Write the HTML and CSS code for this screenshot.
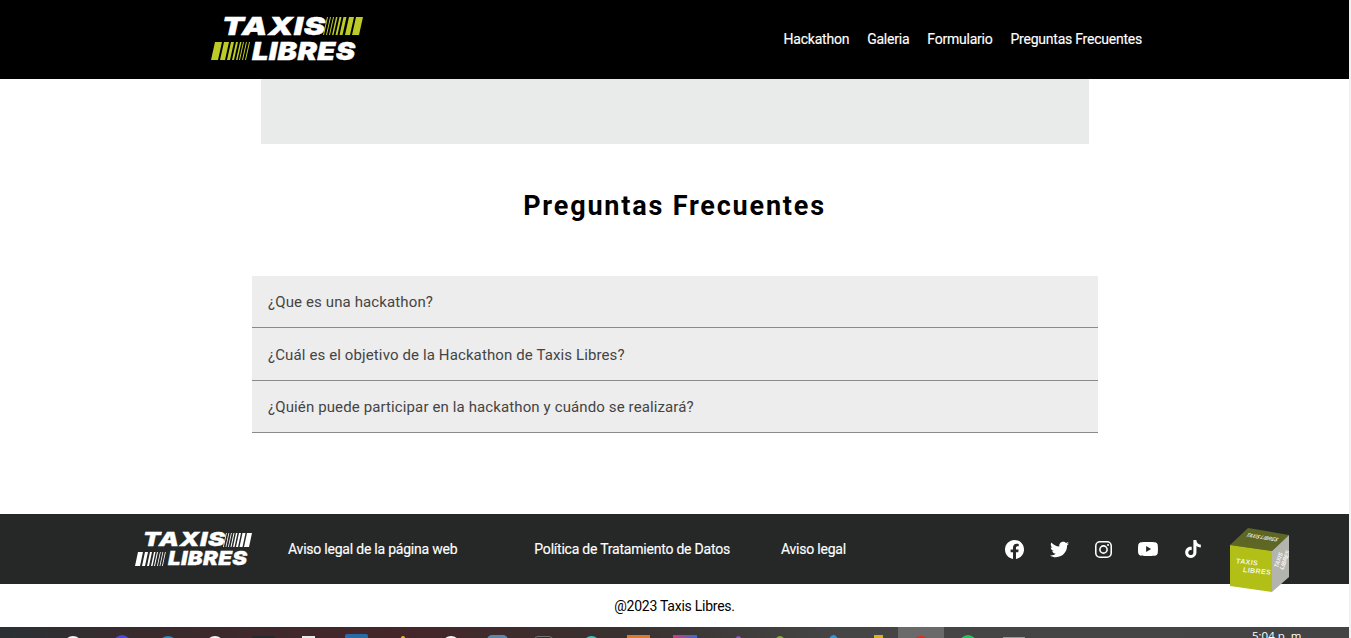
FILE: index.html
```html
<!DOCTYPE html>
<html lang="es">
<head>
<meta charset="utf-8">
<title>Preguntas Frecuentes - Taxis Libres</title>
<link rel="stylesheet" href="styles.css">
</head>
<body>
<header class="site-header">
  <a class="logo" href="#">
    <span class="logo-row logo-row-one">
      <span class="logo-word word-taxis">TAXIS</span>
      <svg class="stripes" width="40" height="18" viewBox="0 0 40 18"><path fill="#bccb25" d="M4 0h1L1 18H0zM7 0h1L4 18H3zM10 0h1L7 18H6zM13 0h1.500l-4 18H9zM16.500 0h2l-4 18h-2zM20.500 0h3l-4 18h-3zM26 0h5l-4 18h-5zM33 0h7l-4 18h-7z"/></svg>
    </span>
    <span class="logo-row">
      <svg class="stripes" width="41" height="18" viewBox="0 0 41 18"><path fill="#bccb25" d="M4 0h7L7 18H0zM13 0h5l-4 18H9zM20 0h3l-4 18h-3zM25 0h2l-4 18h-2zM29 0h1.500l-4 18H25zM32 0h1l-4 18h-1zM35 0h1l-4 18h-1zM38 0h1l-4 18h-1z"/></svg>
      <span class="logo-word word-libres">LIBRES</span>
    </span>
  </a>
  <nav class="main-nav">
    <a href="#">Hackathon</a>
    <a href="#">Galeria</a>
    <a href="#">Formulario</a>
    <a href="#">Preguntas Frecuentes</a>
  </nav>
</header>

<main class="content">
  <div class="banner"></div>
  <h1 class="title">Preguntas Frecuentes</h1>
  <section class="faq">
    <div class="faq-item">¿Que es una hackathon?</div>
    <div class="faq-item">¿Cuál es el objetivo de la Hackathon de Taxis Libres?</div>
    <div class="faq-item">¿Quién puede participar en la hackathon y cuándo se realizará?</div>
  </section>
</main>

<footer class="site-footer">
  <div class="footer-bar">
    <a class="logo logo-small" href="#">
      <span class="logo-row logo-row-one">
        <span class="logo-word word-taxis">TAXIS</span>
        <svg class="stripes" width="29" height="14" viewBox="0 0 29 14"><path fill="#fff" d="M3 0h.8l-3 14H0zM5.500 0h.8l-3 14h-.8zM8 0h.8l-3 14H5zM10.500 0h1l-3 14h-1zM13 0h1.500l-3 14H10zM16 0h2l-3 14h-2zM19.500 0h3l-3 14h-3zM24 0h5l-3 14h-5z"/></svg>
      </span>
      <span class="logo-row">
        <svg class="stripes" width="33" height="14" viewBox="0 0 33 14"><path fill="#fff" d="M3 0h5L5 14H0zM10 0h3l-3 14H7zM15 0h2l-3 14h-2zM19 0h1.500l-3 14H16zM22 0h1l-3 14h-1zM25 0h.8l-3 14H22zM27.500 0h.8l-3 14h-.8zM30 0h.8l-3 14H27z"/></svg>
        <span class="logo-word word-libres">LIBRES</span>
      </span>
    </a>
    <a class="legal legal-one" href="#">Aviso legal de la página web</a>
    <a class="legal legal-two" href="#">Política de Tratamiento de Datos</a>
    <a class="legal legal-three" href="#">Aviso legal</a>
    <div class="social">
      <svg viewBox="0 0 24 24" width="19" height="19"><path fill="#fff" d="M24 12.070C24 5.400 18.630 0 12 0S0 5.400 0 12.070c0 6.030 4.390 11.020 10.130 11.930v-8.440H7.080v-3.490h3.050V9.410c0-3.020 1.790-4.690 4.530-4.690 1.310 0 2.680.24 2.680.24v2.970h-1.510c-1.490 0-1.960.93-1.960 1.880v2.260h3.330l-.53 3.490h-2.800V24C19.610 23.100 24 18.100 24 12.070z"/></svg>
      <svg viewBox="0 0 24 24" width="19" height="19"><path fill="#fff" d="M24 4.560c-.88.390-1.830.660-2.830.780 1.020-.610 1.800-1.580 2.170-2.730-.95.570-2.010.980-3.130 1.200C19.310 2.800 18.030 2.200 16.620 2.200c-3.180 0-5.520 2.970-4.800 6.050C7.730 8.050 4.100 6.090 1.670 3.110.380 5.320 1 8.210 3.190 9.670c-.810-.030-1.570-.250-2.230-.620-.050 2.280 1.580 4.410 3.950 4.890-.690.190-1.450.230-2.220.080.630 1.960 2.440 3.380 4.600 3.420C5.220 19.060 2.610 19.780 0 19.470c2.180 1.400 4.770 2.210 7.550 2.210 9.140 0 14.310-7.720 14-14.650.960-.690 1.790-1.560 2.450-2.470z"/></svg>
      <svg viewBox="0 0 24 24" width="17" height="17"><path fill="#fff" d="M7 0h10a7 7 0 0 1 7 7v10a7 7 0 0 1-7 7H7a7 7 0 0 1-7-7V7a7 7 0 0 1 7-7zm0 2.200A4.800 4.800 0 0 0 2.200 7v10A4.800 4.800 0 0 0 7 21.800h10a4.800 4.800 0 0 0 4.800-4.800V7A4.800 4.800 0 0 0 17 2.200H7zm5 3.600a6.200 6.200 0 1 1 0 12.400 6.200 6.200 0 0 1 0-12.400zm0 2.200a4 4 0 1 0 0 8 4 4 0 0 0 0-8zm6.400-3.900a1.450 1.450 0 1 1 0 2.900 1.450 1.450 0 0 1 0-2.900z"/></svg>
      <svg viewBox="0 0 24 24" width="20" height="20"><path fill="#fff" d="M23.500 6.200a3 3 0 0 0-2.100-2.100C19.500 3.550 12 3.550 12 3.550s-7.500 0-9.400.55A3 3 0 0 0 .5 6.200C0 8.100 0 12 0 12s0 3.900.5 5.800a3 3 0 0 0 2.100 2.100c1.900.55 9.400.55 9.400.55s7.500 0 9.400-.55a3 3 0 0 0 2.100-2.100C24 15.900 24 12 24 12s0-3.900-.5-5.800zM9.750 15.500v-7l6 3.500-6 3.500z"/></svg>
      <svg viewBox="0 0 24 24" width="18" height="18"><path fill="#fff" d="M12.530.020C13.840 0 15.140.010 16.440 0c.08 1.530.630 3.090 1.750 4.170 1.120 1.110 2.700 1.620 4.240 1.790v4.030c-1.440-.050-2.890-.350-4.200-.970-.570-.260-1.100-.590-1.620-.930-.010 2.920.010 5.840-.020 8.750-.080 1.400-.540 2.790-1.350 3.940-1.310 1.920-3.580 3.170-5.910 3.210-1.430.080-2.860-.310-4.080-1.030-2.020-1.190-3.440-3.370-3.650-5.710-.020-.500-.030-1-.010-1.490.180-1.900 1.120-3.720 2.580-4.960 1.660-1.440 3.980-2.130 6.150-1.720.020 1.480-.040 2.960-.040 4.440-.990-.320-2.150-.230-3.020.370-.630.410-1.110 1.040-1.360 1.750-.210.510-.150 1.070-.140 1.610.240 1.640 1.820 3.020 3.500 2.870 1.120-.010 2.190-.660 2.770-1.610.190-.330.400-.670.410-1.060.100-1.790.060-3.570.070-5.360.010-4.030-.010-8.050.020-12.070z"/></svg>
    </div>
    <div class="cube">
      <div class="cube-face cube-top"><span class="cube-text-top">TAXIS LIBRES</span></div>
      <div class="cube-face cube-front"><span class="cube-text-front">TAXIS<span class="cube-line-two">LIBRES</span></span></div>
      <div class="cube-face cube-side"><span class="cube-text-side">TAXIS<br>LIBRES</span></div>
    </div>
  </div>
  <p class="copy">@2023 Taxis Libres.</p>
</footer>

<div class="taskbar">
  <i class="tb tb-white"></i>
  <i class="tb tb-blue"></i>
  <i class="tb tb-cyan"></i>
  <i class="tb tb-white"></i>
  <i class="tb tb-dark"></i>
  <i class="tb tb-paper"></i>
  <i class="tb tb-navy"></i>
  <i class="tb tb-yellow"></i>
  <i class="tb tb-white"></i>
  <i class="tb tb-steel"></i>
  <i class="tb tb-dark-small"></i>
  <i class="tb tb-teal"></i>
  <i class="tb tb-orange"></i>
  <i class="tb tb-multi"></i>
  <i class="tb tb-purple"></i>
  <i class="tb tb-olive"></i>
  <i class="tb tb-sky"></i>
  <i class="tb tb-gold"></i>
  <span class="tb-active"><i class="tb tb-red"></i></span>
  <i class="tb tb-green"></i>
  <i class="tb tb-grey"></i>
  <span class="clock">5:04 p. m.</span>
</div>
</body>
</html>
```

FILE: styles.css
```css
* { box-sizing: border-box; }
html { background: #f1f1f1; height: 638px; overflow: hidden; }
body { margin: 0; width: 1349px; height: 638px; overflow: hidden; background: #fff; font-family: Roboto, "Liberation Sans", sans-serif; color: #000; position: relative; }
a { color: inherit; text-decoration: none; }

.site-header { height: 79px; background: #000; display: flex; align-items: center; justify-content: space-between; padding: 0 207px 2px 211px; }
.logo { display: flex; flex-direction: column; color: #fff; width: 152px; }
.logo-row { display: flex; align-items: center; height: 25px; }
.logo-row-one { padding-left: 11px; }
.logo-word { display: block; font-family: Inter, "Liberation Sans", sans-serif; font-weight: 900; font-style: italic; font-size: 25px; line-height: 18px; transform-origin: left center; white-space: nowrap; -webkit-text-stroke: .4px #fff; }
.word-taxis { width: 101px; letter-spacing: .5px; transform: scaleX(1.285); }
.word-libres { width: 103px; letter-spacing: .3px; transform: scaleX(1.164); }
.main-nav { display: flex; gap: 18px; font-size: 14px; font-weight: 400; color: #fff; letter-spacing: -.23px; -webkit-text-stroke: .15px #fff; }

.content { height: 435px; }
.banner { width: 828px; height: 65px; margin-left: 261px; background: #e9ebea; }
.title { margin: 44px 0 0; text-align: center; font-size: 27px; line-height: 36px; font-weight: 700; letter-spacing: 1.8px; }
.faq { width: 846px; margin: 52px 0 0 252px; }
.faq-item { height: 52px; padding: 0 16px; display: flex; align-items: center; background: #ededed; border-bottom: 1px solid #8a8a8a; font-size: 15px; color: #444; letter-spacing: .12px; }
.faq-item:nth-child(2) { height: 53px; padding-top: 1px; }

.footer-bar { height: 70px; background: #262827; color: #fff; display: flex; align-items: center; padding-left: 135px; font-size: 14px; font-weight: 400; letter-spacing: -.22px; -webkit-text-stroke: .15px #fff; position: relative; }
.logo-small { width: 117px; }
.logo-small .logo-row { height: 19px; }
.logo-small .logo-row-one { padding-left: 8px; }
.logo-small .logo-word { font-size: 19px; line-height: 14px; -webkit-text-stroke: .3px #fff; }
.logo-small .word-taxis { width: 80px; letter-spacing: .4px; transform: scaleX(1.34); }
.logo-small .word-libres { width: 79px; letter-spacing: .3px; transform: scaleX(1.17); }
.legal-one { margin-left: 36px; }
.legal-two { margin-left: 77px; }
.legal-three { margin-left: 51px; }
.social { display: flex; align-items: center; gap: 26px; margin-left: 159px; }

.cube { position: absolute; left: 1230px; top: 14px; width: 60px; height: 66px; -webkit-text-stroke: 0; letter-spacing: 0; }
.cube-face { position: absolute; inset: 0; overflow: hidden; color: #fff; font-family: "Liberation Sans", sans-serif; font-weight: 700; font-style: italic; }
.cube-top { background: #5f6724; clip-path: polygon(18px 0, 59px 7px, 42px 23px, 0 17px); }
.cube-front { background: #b1bf17; clip-path: polygon(0 17px, 42px 23px, 42px 64px, 0 58px); }
.cube-side { background: #b2b4ad; clip-path: polygon(42px 23px, 59px 7px, 59px 49px, 42px 64px); }
.cube-text-top { position: absolute; left: 15px; top: 7px; font-size: 5px; line-height: 5px; white-space: nowrap; transform: skewX(-30deg) rotate(8deg); opacity: .85; }
.cube-text-front { position: absolute; left: 6px; top: 31px; font-size: 7px; line-height: 8px; letter-spacing: .4px; transform: skewY(6deg); opacity: .85; }
.cube-line-two { display: block; margin-left: 7px; }
.cube-text-side { position: absolute; left: 41px; top: 25px; font-size: 6px; line-height: 6px; white-space: nowrap; transform: rotate(-70deg) scaleX(.9); opacity: .9; }

.copy { margin: 0; height: 43px; padding-top: 14px; text-align: center; font-size: 14px; line-height: 16px; letter-spacing: -.25px; }

.taskbar { height: 11px; overflow: hidden; display: flex; align-items: flex-start; padding-left: 64px; background: linear-gradient(90deg, #2b3034 0, #3a2a2c 12%, #45262a 30%, #38312f 46%, #454545 62%, #444 100%); position: relative; }
.tb { flex: none; display: block; width: 18px; height: 18px; margin-top: 9px; border-radius: 50%; }
.tb:nth-child(2) { margin-left: 31px; }
.tb:nth-child(3) { margin-left: 28px; }
.tb:nth-child(4) { margin-left: 29px; }
.tb:nth-child(5) { margin-left: 28px; }
.tb:nth-child(6) { margin-left: 27px; }
.tb:nth-child(7) { margin-left: 30px; }
.tb:nth-child(8) { margin-left: 33px; }
.tb:nth-child(9) { margin-left: 37px; }
.tb:nth-child(10) { margin-left: 27px; }
.tb:nth-child(11) { margin-left: 26px; }
.tb:nth-child(12) { margin-left: 30px; }
.tb:nth-child(13) { margin-left: 27px; }
.tb:nth-child(14) { margin-left: 23px; }
.tb:nth-child(15) { margin-left: 37px; }
.tb:nth-child(16) { margin-left: 31px; }
.tb:nth-child(17) { margin-left: 42px; }
.tb:nth-child(18) { margin-left: 35px; }
.tb:nth-child(20) { margin-left: 15px; }
.tb:nth-child(21) { margin-left: 26px; }
.tb-white { background: #f4f4f4; }
.tb-blue { background: #4f46d8; margin-top: 8px; }
.tb-cyan { background: #1f8fc0; }
.tb-dark { width: 23px; background: #26282a; border-radius: 2px; }
.tb-dark-small { width: 19px; background: #2a2a2a; border: 1px solid #777; border-radius: 4px; }
.tb-paper { width: 13px; background: #e8e8e8; border-radius: 0; }
.tb-navy { width: 23px; background: #2a6aa8; border-radius: 2px; margin-top: 7px; }
.tb-yellow { width: 4px; height: 4px; background: #e8c020; }
.tb-steel { width: 21px; background: #5d86ad; border-radius: 5px; margin-top: 8px; }
.tb-teal { width: 17px; background: #45c0b0; }
.tb-orange { width: 23px; background: #d87a30; border-radius: 0; margin-top: 8px; }
.tb-multi { width: 24px; background: linear-gradient(90deg, #d23a7a, #3a6ad2); border-radius: 0; margin-top: 8px; }
.tb-purple { width: 9px; background: #8a5ac8; }
.tb-olive { width: 12px; background: #8aa83a; }
.tb-sky { width: 11px; background: #2a9ae0; margin-top: 8px; }
.tb-gold { width: 9px; background: #e0ac20; border-radius: 0; margin-top: 8px; }
.tb-active { flex: none; width: 46px; height: 11px; margin-left: 15px; background: #6a6a6a; display: flex; justify-content: center; }
.tb-red { background: #e8281c; }
.tb-green { background: #22c55e; margin-top: 8px; }
.tb-grey { width: 22px; background: #9a9a9a; border-radius: 0; margin-top: 10px; }
.clock { position: absolute; left: 1252px; top: 2px; color: #fff; font-size: 11.500px; line-height: 14px; font-family: "Open Sans", sans-serif; white-space: nowrap; }
```
